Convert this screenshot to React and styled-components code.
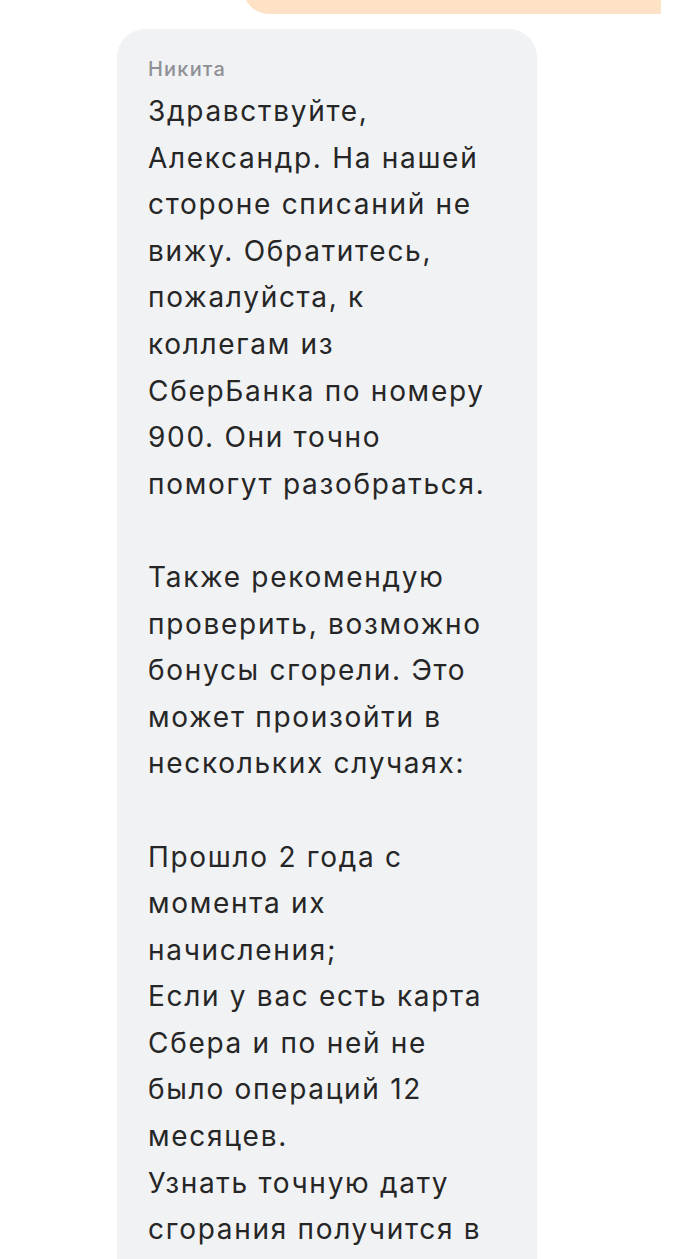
import React from "react";
import styled, { createGlobalStyle } from "styled-components";

const Global = createGlobalStyle`
  html, body { margin: 0; padding: 0; background: #ffffff; height: 1259px; overflow: hidden; }
  body { font-family: Inter, "Noto Sans", sans-serif; -webkit-font-smoothing: antialiased; }
`;

const Chat = styled.div`
  width: 700px;
  display: flex;
  flex-direction: column;
  gap: 15px;
  margin-top: -86px;
`;

const Row = styled.div`
  display: flex;
  justify-content: ${(p) => (p.$out ? "flex-end" : "flex-start")};
  padding: ${(p) => (p.$out ? "0 39px 0 0" : "0 0 0 117px")};
`;

const OutBubble = styled.div`
  width: 418px;
  height: 100px;
  background: #fde2c6;
  border-radius: 24px 24px 0 26px;
`;

const InBubble = styled.div`
  box-sizing: border-box;
  width: 420px;
  background: #f1f2f4;
  border-radius: 28px 28px 28px 0;
  padding: 28px 20px 60px 31px;
`;

const Author = styled.div`
  font-size: 20px;
  line-height: 24px;
  font-weight: 500;
  letter-spacing: 1.2px;
  color: #8f9096;
  margin-bottom: 7px;
`;

const Text = styled.div`
  font-size: 28px;
  line-height: 46.6px;
  font-weight: 400;
  color: #262626;
  white-space: pre-line;
  letter-spacing: 1.7px;
`;

const message = `Здравствуйте,
Александр. На нашей
стороне списаний не
вижу. Обратитесь,
пожалуйста, к
коллегам из
СберБанка по номеру
900. Они точно
помогут разобраться.

Также рекомендую
проверить, возможно
бонусы сгорели. Это
может произойти в
нескольких случаях:

Прошло 2 года с
момента их
начисления;
Если у вас есть карта
Сбера и по ней не
было операций 12
месяцев.
Узнать точную дату
сгорания получится в`;

export default function App() {
  return (
    <>
      <Global />
      <Chat>
        <Row $out>
          <OutBubble />
        </Row>
        <Row>
          <InBubble>
            <Author>Никита</Author>
            <Text>{message}</Text>
          </InBubble>
        </Row>
      </Chat>
    </>
  );
}
